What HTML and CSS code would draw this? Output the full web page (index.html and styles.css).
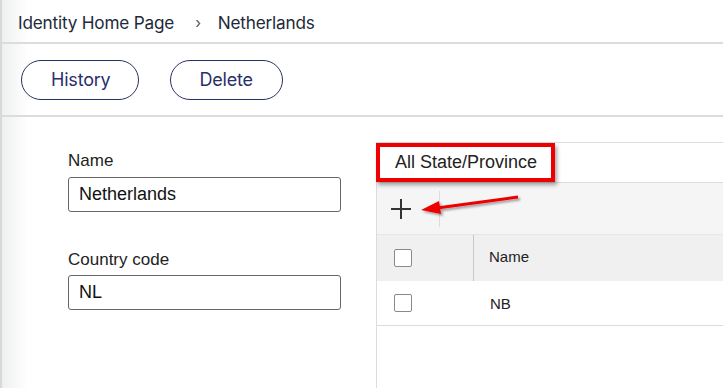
FILE: index.html
```html
<!DOCTYPE html>
<html lang="en">
<head>
    <meta charset="UTF-8">
    <title>Netherlands</title>
    <link rel="stylesheet" href="styles.css">
</head>
<body>
    <div class="page">
        <!-- breadcrumb -->
        <div class="crumbs">
            <a href="#">Identity Home Page</a>
            <span class="sep">&#8250;</span>
            <span>Netherlands</span>
        </div>

        <div class="actions">
            <button class="pill">History</button>
            <button class="pill">Delete</button>
        </div>

        <main class="content">
            <div class="form">
                <label class="field-label">Name</label>
                <input class="field" type="text" value="Netherlands">
                <label class="field-label second">Country code</label>
                <input class="field" type="text" value="NL">
            </div>

            <section class="panel">
                <div class="tabs">
                    <div class="tab marked">All State/Province</div>
                </div>
                <div class="grid-toolbar">
                    <span class="add-btn">
                        <svg width="22" height="22" viewBox="0 0 22 22"><path d="M11 1v20M1 11h20" stroke="#333" stroke-width="2" fill="none"/></svg>
                    </span>
                    <span class="tool-sep"></span>
                </div>
                <div class="grid-row grid-head">
                    <div class="cell check"><span class="box"></span></div>
                    <div class="cell name">Name</div>
                </div>
                <div class="grid-row">
                    <div class="cell check"><span class="box"></span></div>
                    <div class="cell name">NB</div>
                </div>

                <!-- annotation arrow -->
                <svg class="arrow" width="120" height="30" viewBox="0 0 120 30">
                    <defs>
                        <filter id="sh" x="-20%" y="-50%" width="140%" height="200%">
                            <feDropShadow dx="2" dy="2" stdDeviation="1.2" flood-color="#000" flood-opacity="0.35"/>
                        </filter>
                    </defs>
                    <g filter="url(#sh)">
                        <path d="M101 6 L20 17" stroke="#ee0000" stroke-width="3" fill="none"/>
                        <path d="M4 19 L22 10 L24 23 Z" fill="#ee0000"/>
                    </g>
                </svg>
            </section>
        </main>
    </div>
</body>
</html>
```

FILE: styles.css
```css
body {
    margin: 0;
    font-family: 'Liberation Sans', Arial, sans-serif;
    color: #222;
    background: #fff;
    overflow: hidden;
}

.page {
    min-height: 388px;
    border-left: 2px solid #d8d8d8;
    background: linear-gradient(to right, #eef0f0, #ffffff 26px);
}

/* Breadcrumb */
.crumbs {
    height: 42px;
    display: flex;
    align-items: center;
    padding-left: 16px;
    padding-top: 2px;
    box-sizing: border-box;
    font-family: 'Inter', sans-serif;
    font-size: 17.2px;
    color: #1e2a3a;
    border-bottom: 2px solid #dcdcdc;
    letter-spacing: -0.2px;
    height: 44px;
}

.crumbs a {
    color: #1e2a3a;
    text-decoration: none;
}

.crumbs .sep {
    margin: 0 17px 0 21px;
    font-size: 15px;
    color: #555;
}

/* Action buttons */
.actions {
    height: 71px;
    display: flex;
    align-items: center;
    gap: 31px;
    padding-left: 19px;
    border-bottom: 2px solid #dcdcdc;
}

.pill {
    height: 40px;
    padding: 0 29px;
    border: 1px solid #2a2f6c;
    border-radius: 20px;
    background: #fff;
    color: #2a2f6c;
    font-family: 'Inter', sans-serif;
    font-size: 18px;
    letter-spacing: -0.2px;
    cursor: pointer;
}

.pill:first-child {
    padding: 0 27px 0 29px;
}

/* Form + panel */
.content {
    display: flex;
    align-items: flex-start;
}

.form {
    width: 273px;
    padding: 34px 0 0 66px;
    display: flex;
    flex-direction: column;
}

.field-label {
    font-size: 17px;
    color: #222;
    margin-bottom: 6px;
}

.field-label.second {
    margin-top: 38px;
    margin-bottom: 5px;
}

.field {
    height: 35px;
    box-sizing: border-box;
    border: 1px solid #666;
    border-radius: 3px;
    padding: 0 10px;
    font-family: 'Liberation Sans', Arial, sans-serif;
    font-size: 18px;
    color: #111;
}

.panel {
    position: relative;
    flex: 1;
    margin: 25px 0 0 35px;
    border-left: 1px solid #dcdcdc;
    border-top: 1px solid #dcdcdc;
    min-height: 250px;
}

.tabs {
    height: 39px;
    border-bottom: 1px solid #dcdcdc;
    display: flex;
}

.tab {
    display: flex;
    align-items: center;
    padding: 0 14px 0 15px;
    font-size: 18px;
    color: #222;
}

/* red highlight box from the annotation */
.tab.marked {
    margin-left: -1px;
    border: 4px solid #ee0000;
    box-shadow: 2px 3px 4px rgba(0, 0, 0, 0.35);
    position: relative;
    z-index: 2;
}

.grid-toolbar {
    height: 51px;
    background: #f5f5f5;
    display: flex;
    align-items: center;
    padding-left: 13px;
}

.add-btn {
    display: flex;
    width: 22px;
    height: 22px;
}

.tool-sep {
    width: 1px;
    height: 36px;
    background: #dcdcdc;
    margin-left: 27px;
}

.grid-row {
    display: flex;
    height: 44px;
    align-items: center;
    border-bottom: 1px solid #dcdcdc;
    font-size: 15px;
    color: #222;
}

.grid-head {
    height: 46px;
    background: #f0f0f0;
    border-top: 1px solid #e6e6e6;
    border-bottom: none;
}

.grid-head .cell.name {
    padding-bottom: 4px;
}

.cell.check {
    width: 97px;
    height: 100%;
    display: flex;
    align-items: center;
    padding-left: 17px;
    box-sizing: border-box;
}

.grid-head .cell.check {
    border-right: 1px solid #c8c8c8;
}

.cell.name {
    padding-left: 15px;
}

.grid-row:not(.grid-head) .cell.name {
    padding-left: 16px;
}

.box {
    width: 16px;
    height: 16px;
    border: 1px solid #8a8a8a;
    border-radius: 2px;
    background: #fff;
}

.arrow {
    position: absolute;
    left: 40px;
    top: 48px;
    z-index: 3;
}
```
